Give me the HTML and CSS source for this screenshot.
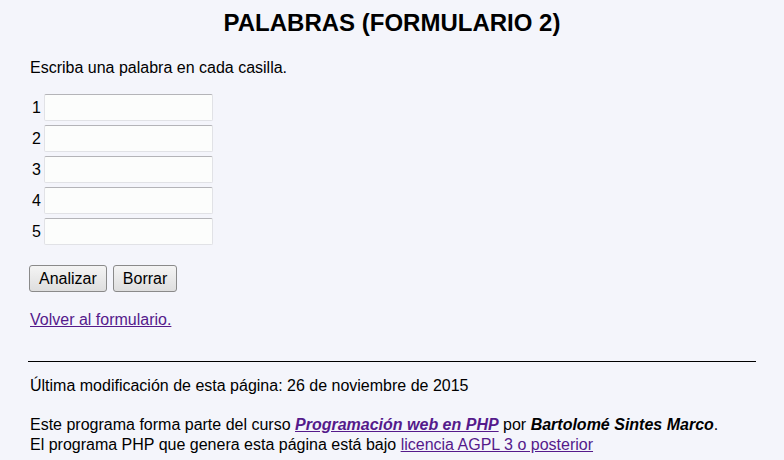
FILE: index.html
```html
<!DOCTYPE html>
<html lang="es">
<head>
<meta charset="utf-8">
<title>Palabras (Formulario 2)</title>
<link rel="stylesheet" href="styles.css">
</head>
<body>
<h1 class="title">PALABRAS (FORMULARIO 2)</h1>
<p class="intro">Escriba una palabra en cada casilla.</p>
<form class="form">
  <div class="rows">
    <label class="num" for="w1">1</label><input class="box" id="w1" type="text">
    <label class="num" for="w2">2</label><input class="box" id="w2" type="text">
    <label class="num" for="w3">3</label><input class="box" id="w3" type="text">
    <label class="num" for="w4">4</label><input class="box" id="w4" type="text">
    <label class="num" for="w5">5</label><input class="box" id="w5" type="text">
  </div>
  <div class="buttons">
    <button class="btn" type="button">Analizar</button>
    <button class="btn" type="reset">Borrar</button>
  </div>
</form>
<p class="back"><a class="link" href="#">Volver al formulario.</a></p>
<footer class="footer">
  <hr class="rule">
  <p class="modified">Última modificación de esta página: 26 de noviembre de 2015</p>
  <p class="credits">Este programa forma parte del curso <a class="link strong" href="#">Programación web en PHP</a> por <b class="author">Bartolomé Sintes Marco</b>.<br>El programa PHP que genera esta página está bajo <a class="link" href="#">licencia AGPL 3 o posterior</a></p>
</footer>
</body>
</html>
```

FILE: styles.css
```css
html { background: #f4f5fb; }
body {
  margin: 0;
  padding: 9px 28px 0;
  font-family: "Liberation Sans", Arial, sans-serif;
  font-size: 16px;
  color: #000;
}
.title {
  margin: 0 0 22px;
  text-align: center;
  font-size: 24px;
  font-weight: bold;
}
.intro { margin: 0 0 17px; padding-left: 2px; }
.form { margin: 0; }
.rows {
  display: grid;
  grid-template-columns: 16px 168px;
  column-gap: 0;
  row-gap: 4px;
  align-items: center;
}
.num { text-align: center; padding-left: 1px; }
.box {
  box-sizing: border-box;
  width: 169px;
  height: 27px;
  margin: 0;
  border: 1px solid #e1e2e6;
  border-top-color: #b4b4b8;
  border-radius: 2px;
  background: #fcfdfc;
  font: inherit;
}
.buttons {
  display: flex;
  gap: 6px;
  margin-top: 20px;
  padding-left: 1px;
}
.btn {
  box-sizing: border-box;
  height: 27px;
  padding: 0 9px;
  border: 1px solid #8a8a8a;
  border-radius: 3px;
  background: linear-gradient(#f4f4f4, #dedede);
  font: inherit;
  color: #000;
}
.back { margin: 19px 0 0; padding-left: 2px; }
.link { color: #551a8b; }
.strong { font-weight: bold; font-style: italic; }
.author { font-style: italic; }
.footer { margin-top: 32px; }
.rule {
  margin: 0;
  border: 0;
  border-top: 1px solid #000;
  height: 0;
}
.modified { margin: 15px 0 0; padding-left: 2px; }
.credits { margin: 20px 0 0; padding-left: 2px; line-height: 20px; }
```
